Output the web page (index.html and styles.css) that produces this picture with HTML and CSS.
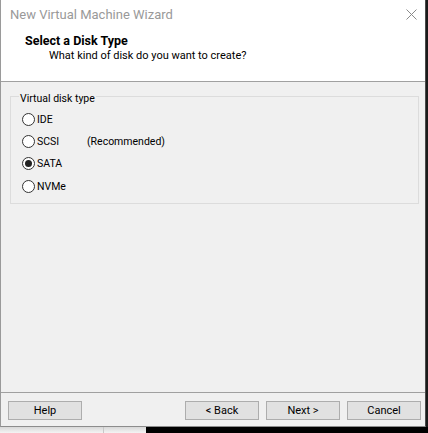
FILE: index.html
```html
<!DOCTYPE html>
<html>
<head>
<meta charset="utf-8">
<link rel="stylesheet" href="styles.css">
</head>
<body>
<div class="desk">
  <div class="window">
    <div class="top">
      <div class="titlebar">
        <span class="title">New Virtual Machine Wizard</span>
        <svg class="close" width="11" height="11" viewBox="0 0 11 11"><path d="M0.5 0.5L10.5 10.5M10.5 0.5L0.5 10.5" stroke="#8a8a8a" stroke-width="1" fill="none"/></svg>
      </div>
      <div class="header">
        <div class="h1">Select a Disk Type</div>
        <div class="h2">What kind of disk do you want to create?</div>
      </div>
    </div>
    <div class="content">
      <fieldset class="group">
        <legend class="legend">Virtual disk type</legend>
        <div class="row"><span class="radio"></span><span class="lbl">IDE</span></div>
        <div class="row"><span class="radio"></span><span class="lbl w50">SCSI</span><span class="lbl">(Recommended)</span></div>
        <div class="row"><span class="radio on"></span><span class="lbl">SATA</span></div>
        <div class="row"><span class="radio"></span><span class="lbl">NVMe</span></div>
      </fieldset>
    </div>
    <div class="footer">
      <button class="btn">Help</button>
      <span class="spacer"></span>
      <button class="btn">&lt; Back</button>
      <button class="btn">Next &gt;</button>
      <button class="btn">Cancel</button>
    </div>
  </div>
  <div class="under">
    <div class="u1"></div>
    <div class="u2"></div>
    <div class="u3"></div>
  </div>
</div>
</body>
</html>
```
FILE: styles.css
```css
html, body {
  margin: 0;
  padding: 0;
}
body {
  width: 428px;
  height: 433px;
  overflow: hidden;
  background: #1a1a1a;
  font-family: Roboto, "Open Sans", sans-serif;
  font-size: 11px;
  color: #000;
}
.desk {
  width: 428px;
  height: 433px;
  display: flex;
  flex-direction: column;
}
.window {
  box-sizing: border-box;
  width: 426px;
  height: 427px;
  background: #f0f0f0;
  border-left: 1px solid #9a9a9a;
  border-right: 1px solid #4a4a4a;
  border-bottom: 1px solid #8c8c8c;
  display: flex;
  flex-direction: column;
}
.top {
  background: #fff;
  height: 82px;
  box-sizing: border-box;
  border-bottom: 1px solid #a0a0a0;
}
.titlebar {
  height: 30px;
  display: flex;
  align-items: center;
  padding: 0 7px 2px 9px;
  box-sizing: border-box;
}
.title {
  color: #999;
  font-size: 13px;
  flex: 1;
}
.close {
  display: block;
  margin-right: 1px;
}
.header {
  padding: 3px 0 0 24px;
}
.h1 {
  font-weight: bold;
  font-size: 12.5px;
  line-height: 15px;
}
.h2 {
  padding-left: 24px;
  line-height: 16px;
}
.content {
  flex: 1;
  padding: 5px 6px 0 9px;
}
.group {
  margin: 0;
  padding: 3px 0 0 11px;
  border: 1px solid #dcdcdc;
  height: 117px;
  box-sizing: border-box;
  font-size: 10.5px;
}
.legend {
  padding: 6px 1px 0;
  margin-left: -3px;
  line-height: 12px;
}
.row {
  display: flex;
  align-items: center;
  height: 22.4px;
}
.radio {
  box-sizing: border-box;
  width: 13px;
  height: 13px;
  border: 1px solid #333;
  border-radius: 50%;
  background: #fff;
  margin-right: 2px;
  display: flex;
  align-items: center;
  justify-content: center;
}
.radio.on::after {
  content: "";
  width: 7px;
  height: 7px;
  border-radius: 50%;
  background: #222;
}
.w50 {
  width: 50px;
}
.footer {
  height: 34px;
  box-sizing: border-box;
  border-top: 1px solid #a0a0a0;
  padding: 8px 4px 0 7px;
  display: flex;
  align-items: flex-start;
  gap: 7px;
}
.spacer {
  flex: 1;
}
.btn {
  box-sizing: border-box;
  width: 74px;
  height: 19px;
  background: #e1e1e1;
  border: 1px solid #adadad;
  font-family: inherit;
  font-size: 11px;
  color: #000;
  padding: 0;
  line-height: 15px;
}
.under {
  flex: 1;
  display: flex;
}
.u1 {
  width: 103px;
  background: linear-gradient(#d8d8d8, #f4f4f4);
  border-right: 1px solid #c8c8c8;
}
.u2 {
  width: 42px;
  background: linear-gradient(#d8d8d8, #f4f4f4);
}
.u3 {
  flex: 1;
  background: #000;
}
```
